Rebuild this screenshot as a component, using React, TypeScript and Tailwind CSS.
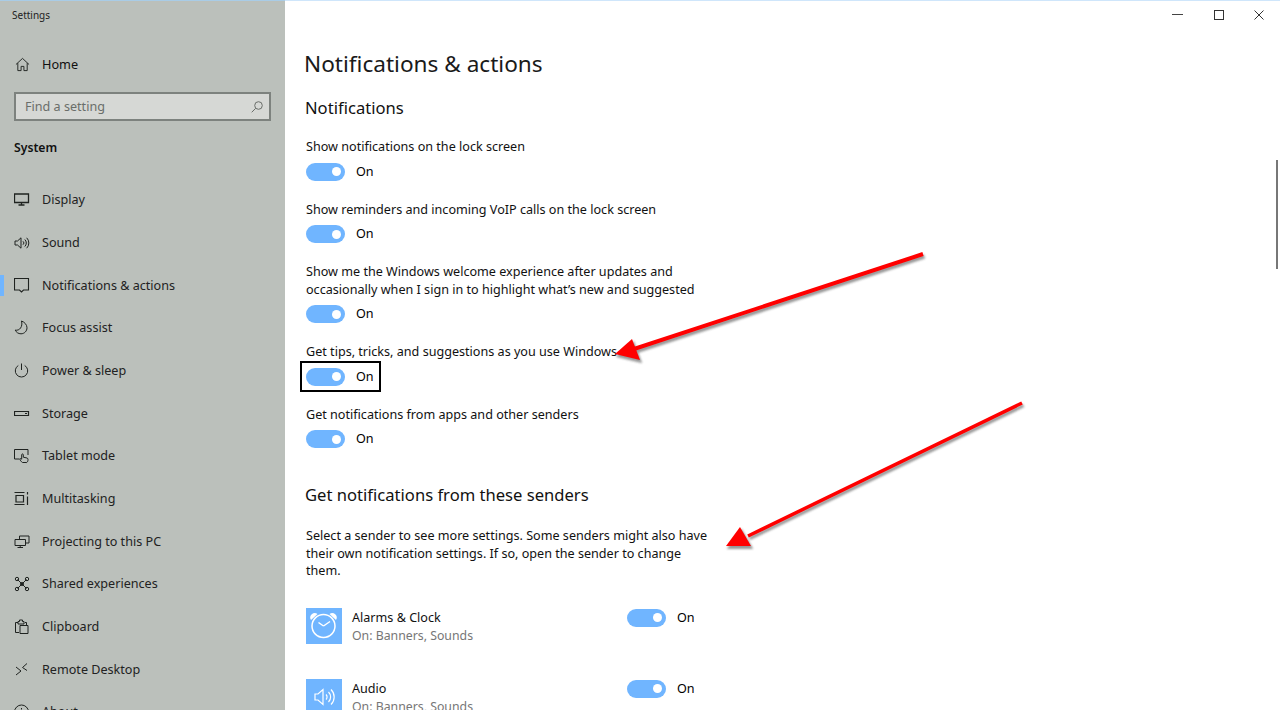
const font = { fontFamily: '"Noto Sans", "Open Sans", sans-serif' }

type IconProps = { children: React.ReactNode; className?: string }

function Ico({ children, className = 'w-4 h-4 text-[#1f2320]' }: IconProps) {
  return (
    <svg viewBox="0 0 16 16" fill="none" stroke="currentColor" strokeWidth="1" className={className}>
      {children}
    </svg>
  )
}

const navItems: { label: string; icon: React.ReactNode; active?: boolean }[] = [
  { label: 'Display', icon: <path d="M.5 2h14v8.500H.5zM4.500 13h6M7.500 10.500V13" strokeWidth="1.300" /> },
  { label: 'Sound', icon: <path d="M1 6h2.500L7 2.800v10.400L3.500 10H1zM9 6.300a2.200 2.200 0 0 1 0 3.400M10.800 4.500a4.800 4.800 0 0 1 0 7M12.700 2.800a7.400 7.400 0 0 1 0 10.400" /> },
  { label: 'Notifications & actions', active: true, icon: <path d="M.5 .5h14v11.500H9.500L7.500 14 5.500 12H.5z" strokeWidth="1.100" /> },
  { label: 'Focus assist', icon: <path d="M7.500 1c3 1.100 5.500 3.700 5.500 6.800 0 3.300-2.700 6-6 6-2.700 0-4.800-1.500-5.800-3.700 4.400 1 7.800-3.500 6.300-9.100z" /> },
  { label: 'Power & sleep', icon: <path d="M7.500 .5v6.500M4.300 2.500a6.200 6.200 0 1 0 6.400 0" /> },
  { label: 'Storage', icon: <path d="M.5 5.500h14v4H.5zM11 7.500h2" strokeWidth="1.200" /> },
  { label: 'Tablet mode', icon: <path d="M5.500 11H.5V1.500H14V7M8.500 14.500c-1.500-1-2.500-2.300-2.500-3.300s1-.8 1.700 0V6.800c0-1.200 1.600-1.200 1.600 0v2.400l3.700.8c.8.300 1 .7 1 1.500 0 1.500-.5 2.500-1.200 3z" /> },
  { label: 'Multitasking', icon: <path d="M.5 1.500h10M.5 13.500h10M2 4.500h7.500v6.500H2zM13.500 1v2.500M13.500 5.500V14" strokeWidth="1.200" /> },
  { label: 'Projecting to this PC', icon: <path d="M5.500 5V2h9.500v7h-3M1 5.500h10.500v6H1zM3.500 13.500H9M6.200 11.500v2" /> },
  { label: 'Shared experiences', icon: <><path d="M3.500 3.500l9 9M12.500 3.500l-9 9" /><circle cx="3" cy="3" r="1.700" /><circle cx="13" cy="3" r="1.700" /><circle cx="3" cy="13" r="1.700" /><circle cx="13" cy="13" r="1.700" /><circle cx="8" cy="8" r="1.500" /></> },
  { label: 'Clipboard', icon: <path d="M5 13.500H1.500V3.500H4M4 5V2.500h1.500V1h3v1.500H10V5zM11 3.500h1.500V6M6 6.500h8v8H6z" /> },
  { label: 'Remote Desktop', icon: <path d="M2 5l5 4-5 4M13 1.500L8.500 5.500l4.500 3" /> },
  { label: 'About', icon: <><circle cx="7.500" cy="8" r="7" /><path d="M7.500 7v5M7.500 4v1.500" /></> },
]

function Toggle() {
  return (
    <div className="w-[39px] h-[18px] rounded-full bg-[#70b5ff] flex items-center justify-end pr-[4px]">
      <div className="w-[9px] h-[9px] rounded-full bg-white" />
    </div>
  )
}

function ToggleRow({ focused }: { focused?: boolean }) {
  return (
    <div className="relative flex items-center gap-[11px] w-fit mt-[7px]">
      <Toggle />
      <span className="text-[12.6px] leading-[18px] text-black">On</span>
      {focused && <span className="absolute -left-[6px] -top-[7px] w-[81px] h-[31px] border-2 border-black" />}
    </div>
  )
}

function Setting({ lines, focused }: { lines: string[]; focused?: boolean }) {
  return (
    <div className="mb-[20px]">
      <div className="text-[12.6px] leading-[17.5px] text-[#111]">
        {lines.map(l => <div key={l}>{l}</div>)}
      </div>
      <ToggleRow focused={focused} />
    </div>
  )
}

function Sender({ name, icon }: { name: string; icon: React.ReactNode }) {
  return (
    <div className="flex h-[71px] shrink-0">
      <div className="w-9 h-9 bg-[#70b5ff] flex items-center justify-center shrink-0">{icon}</div>
      <div className="ml-[10px] w-[275px] pt-px">
        <div className="text-[12.6px] leading-[18px] text-[#111]">{name}</div>
        <div className="text-[12.3px] leading-[18px] text-[#767676]">On: Banners, Sounds</div>
      </div>
      <div className="flex items-start gap-[11px] mt-[1px]">
        <Toggle />
        <span className="text-[12.6px] leading-[18px] text-black">On</span>
      </div>
    </div>
  )
}

function Arrows() {
  return (
    <svg className="absolute left-0 top-0 w-[1280px] h-[710px] pointer-events-none" viewBox="0 0 1280 710" fill="none">
      <defs>
        <filter id="soft">
          <feGaussianBlur stdDeviation="1" />
        </filter>
      </defs>
      <g transform="translate(1.5 2.5)" opacity="0.5" fill="#333" stroke="#333" filter="url(#soft)">
        <path d="M923 254L634 349" strokeWidth="4" />
        <path d="M615 354L632 339 640 360z" />
        <path d="M1022 403L748 536" strokeWidth="3.500" />
        <path d="M726 546L740 527 751 546z" />
      </g>
      <path d="M923 254L634 349" stroke="#ff0000" strokeWidth="4" />
      <path d="M615 354L632 339 640 360z" fill="#ff0000" />
      <path d="M1022 403L748 536" stroke="#ff0000" strokeWidth="3.500" />
      <path d="M726 546L740 527 751 546z" fill="#ff0000" />
    </svg>
  )
}

export default function App() {
  return (
    <div className="relative w-[1280px] h-[710px] overflow-hidden flex bg-white" style={font}>
      <div className="absolute left-0 top-0 w-full h-px bg-[#cfe6fb]" />
      <div className="absolute left-0 top-0 w-[285px] h-px bg-[#a9cce6]" />

      <aside className="w-[285px] h-full shrink-0 bg-[#bbc0bb] flex flex-col">
        <div className="pl-3 pt-[8px] shrink-0 text-[10px] leading-[14px] text-[#222]">Settings</div>

        <div className="flex items-center h-[42px] shrink-0 mt-[21px] pl-[15px]">
          <Ico className="w-[15px] h-[15px] text-[#1f2320]">
            <path d="M1 8L8 1.500 15 8M3 6.500V14.500H6.500V10H9.500V14.500H13V6.500" />
          </Ico>
          <span className="ml-[12px] text-[12.7px] leading-[20px] text-[#111]">Home</span>
        </div>

        <div className="mx-[14px] mt-[7px] h-[29px] shrink-0 border-2 border-[#7d827e] bg-[#d6d8d5] flex items-center justify-between pl-[9px] pr-[6px]">
          <span className="text-[12.6px] leading-[18px] text-[#6a6e6a]">Find a setting</span>
          <svg viewBox="0 0 12 12" fill="none" stroke="#6a6e6a" strokeWidth="1" className="w-3 h-3">
            <circle cx="7.500" cy="4.500" r="3.800" />
            <path d="M4.700 7.300L.7 11.300" />
          </svg>
        </div>

        <div className="pl-[14px] mt-[17px] shrink-0 text-[12.2px] leading-[20px] font-semibold text-[#111]">System</div>

        <nav className="mt-[21px] shrink-0 flex flex-col">
          {navItems.map(item => (
            <div key={item.label} className="relative h-[42.67px] shrink-0 flex items-center pl-[14px]">
              {item.active && <div className="absolute left-0 top-[11px] w-1 h-[21px] bg-[#70b5ff]" />}
              <Ico>{item.icon}</Ico>
              <span className="ml-[12px] text-[12.6px] leading-[18px] text-[#222]">{item.label}</span>
            </div>
          ))}
        </nav>
      </aside>

      <main className="flex-1 min-w-0 flex flex-col">
        <div className="flex justify-end shrink-0 h-[29px]">
          <div className="w-[41px] flex items-center justify-center">
            <div className="w-[11px] h-px bg-[#444]" />
          </div>
          <div className="w-[41px] flex items-center justify-center">
            <div className="w-[10px] h-[10px] border border-[#333]" />
          </div>
          <div className="w-[41px] flex items-center justify-center pr-px">
            <svg viewBox="0 0 10 10" stroke="#333" strokeWidth="1" className="w-[10px] h-[10px]">
              <path d="M.5 .5l9 9M9.500 .5l-9 9" />
            </svg>
          </div>
        </div>

        <div className="pl-[19px] mt-[17px] text-[22.6px] leading-[36px] text-[#1a1a1a]">Notifications &amp; actions</div>
        <div className="pl-[20px] mt-[14px] text-[16.6px] leading-[24px] text-[#111]">Notifications</div>

        <div className="pl-[21px] mt-[18px] flex flex-col">
          <Setting lines={['Show notifications on the lock screen']} />
          <Setting lines={['Show reminders and incoming VoIP calls on the lock screen']} />
          <Setting lines={['Show me the Windows welcome experience after updates and', 'occasionally when I sign in to highlight what’s new and suggested']} />
          <Setting lines={['Get tips, tricks, and suggestions as you use Windows']} focused />
          <Setting lines={['Get notifications from apps and other senders']} />

          <div className="-ml-px mt-[15px] text-[16.6px] leading-[24px] text-[#111]">Get notifications from these senders</div>
          <div className="mt-[20px] text-[12.6px] leading-[17.5px] text-[#111]">
            <div>Select a sender to see more settings. Some senders might also have</div>
            <div>their own notification settings. If so, open the sender to change</div>
            <div>them.</div>
          </div>

          <div className="mt-[28px] flex flex-col">
            <Sender
              name="Alarms & Clock"
              icon={
                <svg viewBox="0 0 36 36" fill="none" stroke="#fff" strokeWidth="1.500" className="w-9 h-9">
                  <circle cx="17.500" cy="18" r="11.500" />
                  <path d="M17.500 18l6.500-4.500M17.500 18l-5-3.500" />
                  <path d="M5 12a4.500 4.500 0 0 1 6.500-6zM30 12a4.500 4.500 0 0 0-6.500-6z" fill="#fff" stroke="none" />
                </svg>
              }
            />
            <Sender
              name="Audio"
              icon={
                <svg viewBox="0 0 36 36" fill="none" stroke="#fff" strokeWidth="1.200" className="w-9 h-9">
                  <path d="M9 15h3l5-4.500v15L12 21H9zM20 15.500a3.500 3.500 0 0 1 0 5M22.500 13a7 7 0 0 1 0 10M25 10.500a10.500 10.500 0 0 1 0 15" />
                </svg>
              }
            />
          </div>
        </div>
      </main>

      <div className="absolute left-[1276px] top-[160px] w-[2px] h-[109px] bg-[#777]" />
      <Arrows />
    </div>
  )
}
